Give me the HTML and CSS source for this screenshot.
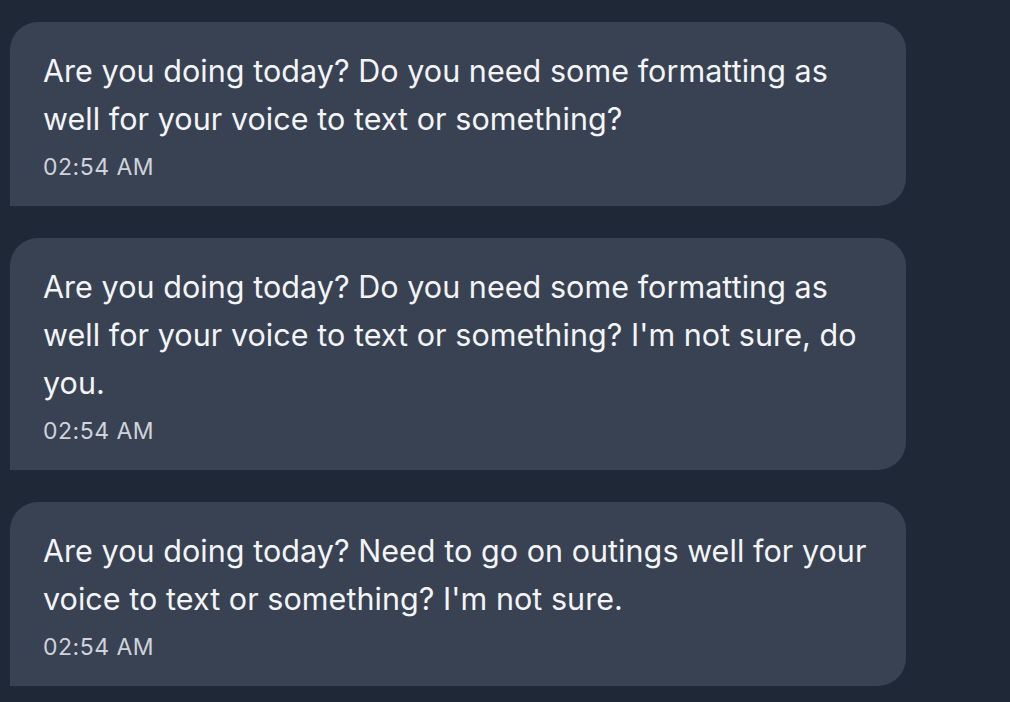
FILE: index.html
```html
<!DOCTYPE html>
<html lang="en">
<head>
<meta charset="utf-8">
<title>Messages</title>
<link rel="stylesheet" href="styles.css">
</head>
<body>
<main class="thread">
  <div class="bubble">
    <p class="text">Are you doing today? Do you need some formatting as well for your voice to text or something?</p>
    <div class="time">02:54 AM</div>
  </div>
  <div class="bubble">
    <p class="text">Are you doing today? Do you need some formatting as well for your voice to text or something? I'm not sure, do you.</p>
    <div class="time">02:54 AM</div>
  </div>
  <div class="bubble">
    <p class="text">Are you doing today? Need to go on outings well for your voice to text or something? I'm not sure.</p>
    <div class="time">02:54 AM</div>
  </div>
</main>
</body>
</html>
```

FILE: styles.css
```css
html, body {
  margin: 0;
  padding: 0;
  background: #1f2837;
  height: 100%;
}

body {
  font-family: Inter, "Noto Sans", "Liberation Sans", sans-serif;
  overflow: hidden;
}

.thread {
  display: flex;
  flex-direction: column;
  gap: 32px;
  padding: 22px 0 0 10px;
}

.bubble {
  box-sizing: border-box;
  width: 896px;
  background: #384253;
  border-radius: 28px 28px 28px 0;
  padding: 25px 24px 23px 33px;
}

.text {
  margin: 0;
  color: #f3f4f6;
  font-size: 30.5px;
  letter-spacing: 0.05px;
  line-height: 48px;
}

.time {
  margin-top: 8px;
  color: #cfd3da;
  font-size: 23px;
  letter-spacing: 0.5px;
  line-height: 32px;
}
```
